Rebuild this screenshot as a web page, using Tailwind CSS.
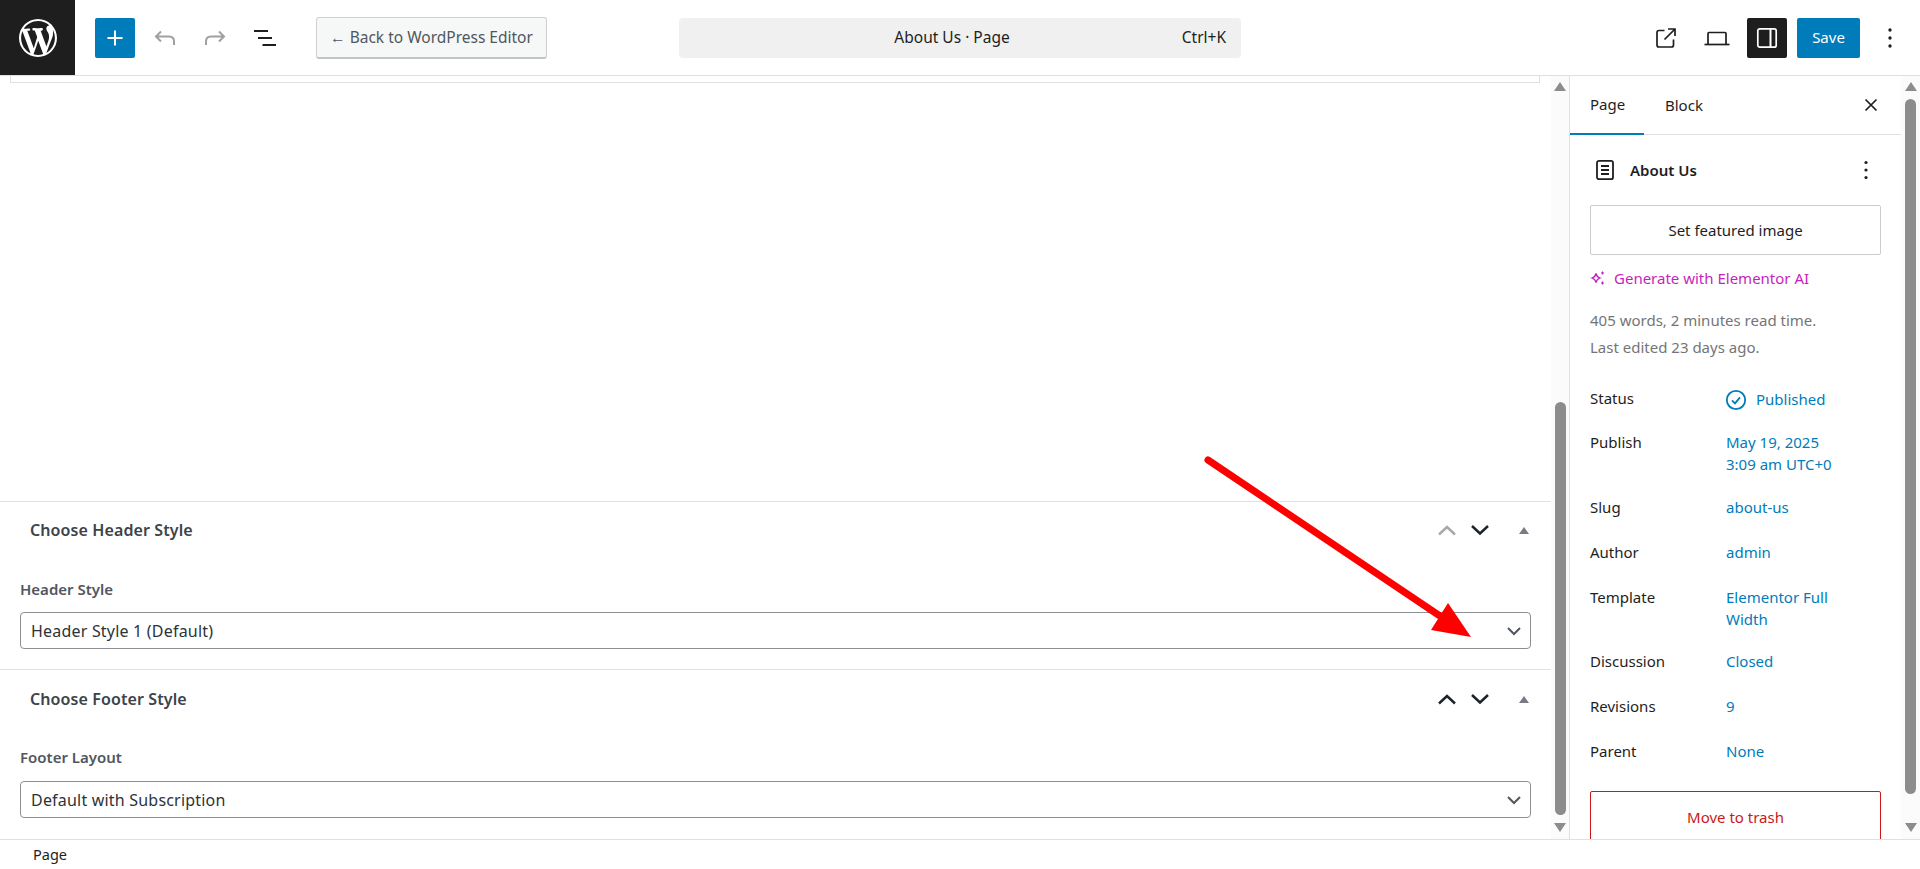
<!DOCTYPE html>
<html>
<head>
<meta charset="utf-8">
<script src="https://cdn.jsdelivr.net/npm/@tailwindcss/browser@4"></script>
</head>
<body class="bg-white">
<div class="relative w-[1920px] h-[869px] overflow-hidden flex flex-col font-['Noto_Sans',sans-serif] text-[15px] text-[#1e1e1e]">
  <header class="h-[76px] shrink-0 flex items-center border-b border-[#e0e0e0]">
    <div class="w-[75px] h-[75px] bg-[#1e1e1e] flex items-center justify-center shrink-0">
      <svg viewBox="0 0 20 20" class="w-[38px] h-[38px]" fill="#fff" fill-rule="evenodd"><path d="M20 10c0-5.510-4.490-10-10-10C4.480 0 0 4.490 0 10c0 5.520 4.480 10 10 10 5.510 0 10-4.480 10-10zM7.780 15.370L4.370 6.220c.550-.020 1.170-.080 1.170-.080.500-.060.440-1.130-.060-1.110 0 0-1.450.110-2.370.110-.180 0-.370 0-.580-.010C4.120 2.690 6.890 1.050 10 1.050c2.330 0 4.450.870 6.030 2.340-.680-.110-1.650.390-1.650 1.580 0 .740.450 1.360.900 2.100.350.610.550 1.360.550 2.460 0 1.490-1.400 5-1.400 5l-3.030-8.370c.540-.020.820-.170.820-.170.500-.050.440-1.250-.060-1.220 0 0-1.440.120-2.380.120-.870 0-2.330-.120-2.330-.120-.500-.030-.560 1.200-.060 1.220l.920.080 1.260 3.410zM17.410 10c.240-.640.740-1.870.430-4.250.700 1.290 1.050 2.710 1.050 4.250 0 3.290-1.730 6.240-4.480 7.830 1-2.670 2-5.340 3-7.830zM6.100 18.090C3.120 16.640 1.110 13.530 1.110 10c0-1.300.230-2.480.720-3.590C3.250 10.300 4.670 14.200 6.100 18.090zm4.030-6.630l2.580 6.980c-.860.290-1.740.450-2.710.450-.820 0-1.620-.110-2.370-.330.870-2.400 1.700-4.780 2.500-7.100z"/></svg>
    </div>
    <button class="ml-[20px] w-[40px] h-[40px] bg-[#007cba] rounded-[2px] flex items-center justify-center shrink-0">
      <svg viewBox="0 0 24 24" class="w-[24px] h-[24px]" fill="#fff"><path d="M11 4.500h2V11h6.500v2H13v6.500h-2V13H4.500v-2H11z"/></svg>
    </button>
    <svg viewBox="0 0 24 24" class="ml-[18px] w-[24px] h-[24px] shrink-0" fill="none" stroke="#a0a0a0" stroke-width="2"><path d="M8 5.500L3 10.500l5 5M3 10.500h13c3.500 0 5 2.500 5 5V19"/></svg>
    <svg viewBox="0 0 24 24" class="ml-[26px] w-[24px] h-[24px] shrink-0" fill="none" stroke="#a0a0a0" stroke-width="2"><path d="M16 5.500l5 5-5 5M21 10.500H8c-3.500 0-5 2.500-5 5V19"/></svg>
    <svg viewBox="0 0 24 24" class="ml-[26px] w-[24px] h-[24px] shrink-0" fill="#1e1e1e"><path d="M1 4h14v2H1zM5 11h14v2H5zM9.500 18H23v2H9.500z"/></svg>
    <button class="ml-[39px] w-[231px] h-[42px] pt-[2px] bg-[#f6f7f7] border border-[#d0d0d0] border-b-[2px] border-b-[#c4c4c4] rounded-[3px] text-[15.500px] text-[#50575e] shrink-0">← Back to WordPress Editor</button>
    <div class="ml-[132px] w-[562px] h-[40px] pt-[1px] bg-[#f0f0f0] rounded-[4px] flex items-center relative shrink-0 text-[15.500px]">
      <span class="w-full text-center pr-[16px]">About Us · Page</span>
      <span class="absolute right-[15px]">Ctrl+K</span>
    </div>
    <div class="ml-auto flex items-center">
      <svg viewBox="0 0 24 24" class="w-[24px] h-[24px]" fill="none" stroke="#1e1e1e" stroke-width="1.700"><path d="M10.500 4.500H5a2 2 0 0 0-2 2v12.500a2 2 0 0 0 2 2h12.500a2 2 0 0 0 2-2v-5.500"/><path d="M14 3h7v7M21 3L10.500 13.500"/></svg>
      <svg viewBox="0 0 28 24" class="ml-[25px] w-[28px] h-[24px]" fill="none" stroke="#1e1e1e" stroke-width="1.700"><path d="M5 18V7.500a1 1 0 0 1 1-1h16a1 1 0 0 1 1 1V18"/><path d="M1.500 18.500h25"/></svg>
      <button class="ml-[16px] w-[40px] h-[40px] bg-[#1e1e1e] rounded-[2px] flex items-center justify-center">
        <svg viewBox="0 0 24 24" class="w-[24px] h-[24px]" fill="none" stroke="#fff" stroke-width="1.700"><rect x="2.800" y="2.800" width="18.400" height="18.400" rx="2"/><path d="M15.500 3v18" stroke-width="2"/></svg>
      </button>
      <button class="ml-[10px] w-[63px] h-[40px] bg-[#007cba] rounded-[2px] text-white">Save</button>
      <svg viewBox="0 0 24 24" class="ml-[18px] mr-[18px] w-[24px] h-[24px]" fill="#1e1e1e"><circle cx="12" cy="4" r="1.700"/><circle cx="12" cy="12" r="1.700"/><circle cx="12" cy="20" r="1.700"/></svg>
    </div>
  </header>

  <div class="flex-1 flex min-h-0">
    <main class="w-[1569px] shrink-0 flex min-h-0">
      <div class="w-[1551px] shrink-0 flex flex-col">
        <div class="h-[7px] ml-[10px] w-[1530px] border border-t-0 border-[#e0e0e0] shrink-0"></div>
        <div class="h-[418px] shrink-0"></div>
        <section class="h-[168px] shrink-0 border-t border-[#e0e0e0] flex flex-col">
          <div class="flex items-center h-[56px] shrink-0 pl-[30px] pr-[22px]">
            <h2 class="text-[16px] font-semibold text-[#3c434a] flex-1 tracking-[0.1px]">Choose Header Style</h2>
            <svg viewBox="0 0 20 20" class="w-[20px] h-[20px]" fill="none" stroke="#a7aaad" stroke-width="2.500"><path d="M2 14.500l8-7.500 8 7.500"/></svg>
            <svg viewBox="0 0 20 20" class="ml-[13px] w-[20px] h-[20px]" fill="none" stroke="#1d2327" stroke-width="2.500"><path d="M2 6l8 7.500 8-7.500"/></svg>
            <svg viewBox="0 0 10 7" class="ml-[29px] w-[10px] h-[7px]" fill="#787c82"><path d="M5 0l5 7H0z"/></svg>
          </div>
          <label class="mx-[20px] mt-[22px] font-semibold text-[#50575e] leading-[18px]">Header Style</label>
          <div class="mx-[20px] mt-[14px] h-[37px] shrink-0 border border-[#8c8f94] rounded-[4px] flex items-center pl-[10px] pr-[8px] text-[16px] text-[#2c3338] tracking-[0.2px]">
            <span class="flex-1">Header Style 1 (Default)</span>
            <svg viewBox="0 0 16 16" class="w-[16px] h-[16px]" fill="none" stroke="#50575e" stroke-width="2"><path d="M2 5l6 6 6-6"/></svg>
          </div>
        </section>
        <section class="flex-1 border-t border-[#e0e0e0] flex flex-col">
          <div class="flex items-center h-[58px] shrink-0 pl-[30px] pr-[22px]">
            <h2 class="text-[16px] font-semibold text-[#3c434a] flex-1 tracking-[0.1px]">Choose Footer Style</h2>
            <svg viewBox="0 0 20 20" class="w-[20px] h-[20px]" fill="none" stroke="#1d2327" stroke-width="2.500"><path d="M2 14.500l8-7.500 8 7.500"/></svg>
            <svg viewBox="0 0 20 20" class="ml-[13px] w-[20px] h-[20px]" fill="none" stroke="#1d2327" stroke-width="2.500"><path d="M2 6l8 7.500 8-7.500"/></svg>
            <svg viewBox="0 0 10 7" class="ml-[29px] w-[10px] h-[7px]" fill="#787c82"><path d="M5 0l5 7H0z"/></svg>
          </div>
          <label class="mx-[20px] mt-[20px] font-semibold text-[#50575e] leading-[18px]">Footer Layout</label>
          <div class="mx-[20px] mt-[15px] h-[37px] shrink-0 border border-[#8c8f94] rounded-[4px] flex items-center pl-[10px] pr-[8px] text-[16px] text-[#2c3338] tracking-[0.2px]">
            <span class="flex-1">Default with Subscription</span>
            <svg viewBox="0 0 16 16" class="w-[16px] h-[16px]" fill="none" stroke="#50575e" stroke-width="2"><path d="M2 5l6 6 6-6"/></svg>
          </div>
        </section>
      </div>
      <div class="flex-1 bg-[#fbfbfb] flex flex-col items-center pt-[6px] pb-[7px] gap-[8px]">
        <div class="w-0 h-0 border-x-[6px] border-x-transparent border-b-[9px] border-b-[#8c8c8c]"></div>
        <div class="flex-1 w-full flex flex-col justify-end"><div class="h-[413px] w-[11px] mx-auto bg-[#8c8c8c] rounded-full"></div></div>
        <div class="w-0 h-0 border-x-[6px] border-x-transparent border-t-[9px] border-t-[#8c8c8c]"></div>
      </div>
    </main>
    <aside class="flex-1 flex border-l border-[#e0e0e0] min-h-0 overflow-hidden">
      <div class="w-[331px] shrink-0 flex flex-col min-h-0 overflow-hidden">
        <div class="h-[59px] shrink-0 flex items-center border-b border-[#e0e0e0]">
          <div class="h-[59px] w-[74px] pl-[20px] flex items-center border-b-[2px] border-[#007cba]">Page</div>
          <div class="pl-[21px] flex items-center">Block</div>
          <svg viewBox="0 0 24 24" class="ml-auto mr-[18px] w-[24px] h-[24px]" fill="none" stroke="#1e1e1e" stroke-width="1.700"><path d="M6.500 6.500l11 11M17.500 6.500l-11 11"/></svg>
        </div>
        <div class="px-[20px] flex flex-col">
          <div class="flex items-center h-[70px] shrink-0">
            <svg viewBox="0 0 24 24" class="ml-[3px] w-[24px] h-[24px]" fill="none" stroke="#1e1e1e" stroke-width="1.800"><rect x="4" y="2.800" width="16" height="18.400" rx="2"/><path d="M8 8h8M8 12h8M8 16h8"/></svg>
            <span class="ml-[13px] font-semibold flex-1">About Us</span>
            <svg viewBox="0 0 24 24" class="w-[24px] h-[24px] mr-[3px]" fill="#1e1e1e"><circle cx="12" cy="4.500" r="1.600"/><circle cx="12" cy="12" r="1.600"/><circle cx="12" cy="19.500" r="1.600"/></svg>
          </div>
          <button class="h-[50px] w-full border border-[#ccc] rounded-[2px] shrink-0">Set featured image</button>
          <div class="flex items-center mt-[13px] h-[20px] text-[#c71fbc] shrink-0">
            <svg viewBox="0 0 16 16" class="w-[16px] h-[16px]" fill="none" stroke="#c71fbc" stroke-width="1.300"><path d="M6 3.500c.5 2.500 1.500 3.700 4 4.500-2.500.8-3.500 2-4 4.500-.5-2.500-1.500-3.700-4-4.500 2.500-.8 3.500-2 4-4.500z"/><path d="M12.500 1.500v3M11 3h3M12.500 11.500v3M11 13h3" stroke-width="1.200"/></svg>
            <span class="ml-[8px]">Generate with Elementor AI</span>
          </div>
          <p class="mt-[19px] leading-[27px] text-[#757575] shrink-0">405 words, 2 minutes read time.<br>Last edited 23 days ago.</p>
          <dl class="mt-[26px] grid grid-cols-[136px_1fr] leading-[22px] shrink-0">
            <dt class="h-[44px]">Status</dt>
            <dd class="text-[#007cba] flex items-start h-[22px] pt-[1px]"><svg viewBox="0 0 24 24" class="w-[24px] h-[24px] -ml-[2px] shrink-0" fill="none" stroke="#007cba" stroke-width="1.800"><circle cx="12" cy="12" r="9.200"/><path d="M8 12.300l3 3 5-6"/></svg><span class="ml-[8px]">Published</span></dd>
            <dt class="h-[65px]">Publish</dt>
            <dd class="text-[#007cba]">May 19, 2025<br>3:09 am UTC+0</dd>
            <dt class="h-[45px]">Slug</dt>
            <dd class="text-[#007cba]">about-us</dd>
            <dt class="h-[45px]">Author</dt>
            <dd class="text-[#007cba]">admin</dd>
            <dt class="h-[64px]">Template</dt>
            <dd class="text-[#007cba]">Elementor Full<br>Width</dd>
            <dt class="h-[45px]">Discussion</dt>
            <dd class="text-[#007cba]">Closed</dd>
            <dt class="h-[45px]">Revisions</dt>
            <dd class="text-[#007cba]">9</dd>
            <dt class="h-[51px]">Parent</dt>
            <dd class="text-[#007cba]">None</dd>
          </dl>
          <button class="h-[52px] w-full border border-[#cc1818] rounded-[2px] text-[#cc1818] shrink-0">Move to trash</button>
        </div>
      </div>
      <div class="flex-1 bg-[#fbfbfb] flex flex-col items-center pt-[6px] pb-[7px] gap-[8px]">
        <div class="w-0 h-0 border-x-[6px] border-x-transparent border-b-[9px] border-b-[#8c8c8c]"></div>
        <div class="flex-1 w-full"><div class="h-[695px] w-[11px] mx-auto bg-[#8c8c8c] rounded-full"></div></div>
        <div class="w-0 h-0 border-x-[6px] border-x-transparent border-t-[9px] border-t-[#8c8c8c]"></div>
      </div>
    </aside>
  </div>

  <footer class="h-[30px] shrink-0 border-t border-[#e0e0e0] bg-white flex items-center pl-[33px] text-[14.500px]">Page</footer>

  <svg class="absolute left-0 top-0 w-[1920px] h-[869px] pointer-events-none" viewBox="0 0 1920 869">
    <path d="M1208 460L1440 616" stroke="#ff0000" stroke-width="7" stroke-linecap="round"/>
    <path d="M1448 603L1471 637L1431 630z" fill="#ff0000"/>
  </svg>
</div>
</body>
</html>
